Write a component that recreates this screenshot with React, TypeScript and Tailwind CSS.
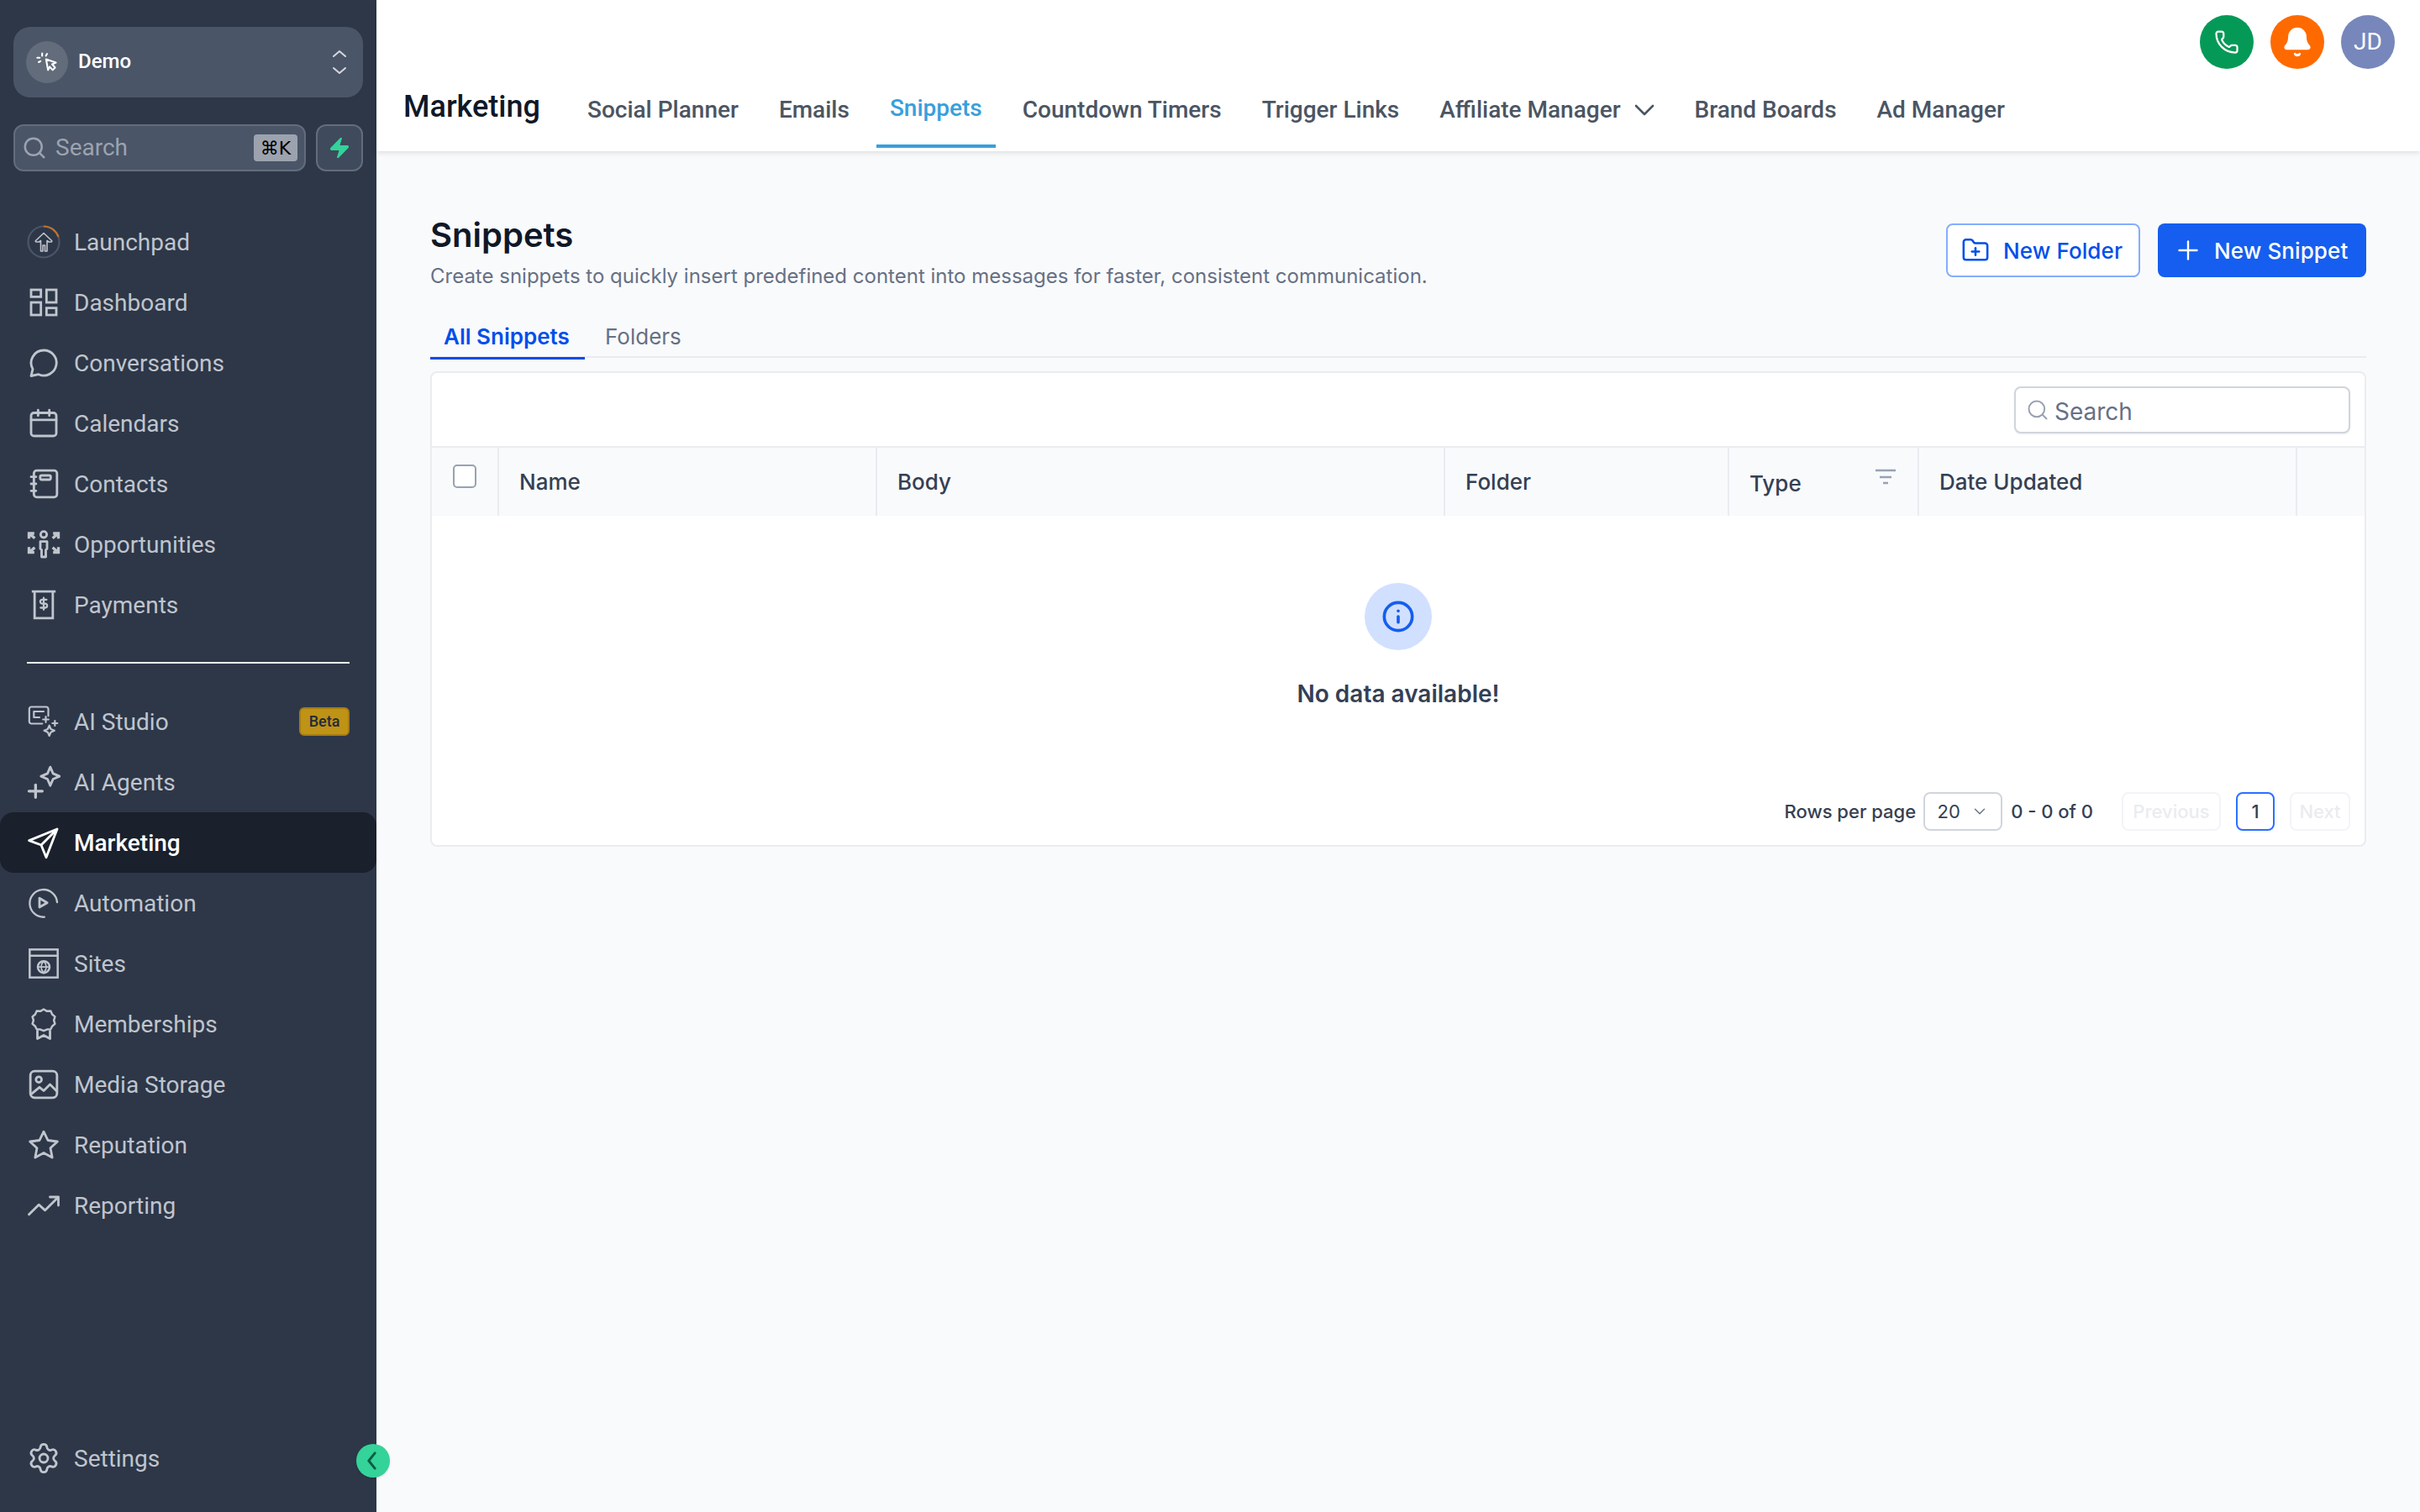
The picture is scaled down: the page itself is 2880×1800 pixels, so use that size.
import { Bell, ChevronDown, FolderPlus, Info, Phone, Plus, Search, Settings, Zap } from "lucide-react"
import type { ReactNode } from "react"

const icon = (children: ReactNode) => (
  <svg viewBox="0 0 24 24" fill="none" stroke="currentColor" strokeWidth="1.7" strokeLinecap="round" strokeLinejoin="round" className="size-[40px] shrink-0">
    {children}
  </svg>
)

const Launchpad = (
  <svg viewBox="0 0 40 40" fill="none" className="size-[40px] shrink-0" strokeWidth="2.2">
    <circle cx="20" cy="20" r="18.5" stroke="#4a5568" />
    <path d="M20 1.5A18.5 18.5 0 0 1 37.5 14" stroke="#c2732c" />
    <path d="M20 9.5 10.5 18.5c-.6.6-.2 1.5.6 1.5h3.4l2-1.5V31h2.5v-7h2.5v7H24V18.5l2 1.5h2.9c.8 0 1.2-.9.6-1.5z" stroke="currentColor" strokeWidth="1.6" strokeLinejoin="round" />
  </svg>
)

const mainNav = [
  { label: "Launchpad", icon: Launchpad },
  {
    label: "Dashboard",
    icon: icon(
      <g strokeLinecap="butt" strokeLinejoin="miter">
        <rect x="3" y="3" width="7" height="5" />
        <rect x="14" y="3" width="7" height="9" />
        <rect x="3" y="12" width="7" height="9" />
        <rect x="14" y="16" width="7" height="5" />
      </g>,
    ),
  },
  { label: "Conversations", icon: icon(<path d="M12 3a9 9 0 1 1-3.6 17.2L3 21.3l1.2-4.9A9 9 0 0 1 12 3z" />) },
  {
    label: "Calendars",
    icon: icon(
      <>
        <rect x="3" y="4.5" width="18" height="16.5" rx="2" />
        <path d="M3 9.5h18M8 2.5v4M16 2.5v4" />
      </>,
    ),
  },
  {
    label: "Contacts",
    icon: icon(
      <>
        <rect x="5" y="2.5" width="16.5" height="19" rx="2" />
        <rect x="9.5" y="6" width="7.5" height="3" rx="1" />
        <path d="M3 7h3.5M3 12h3.5M3 17h3.5" />
      </>,
    ),
  },
  {
    label: "Opportunities",
    icon: icon(
      <g strokeWidth="2">
        <circle cx="12" cy="5" r="2.2" strokeWidth="1.7" />
        <path d="M9.6 10h4.8v5.2l-.9.7V21h-3v-5.1l-.9-.7z" strokeWidth="1.7" />
        <path d="M1.5 8V4.2h3.8M2 4.5l3.6 3.2M22.5 8V4.2h-3.8M22 4.5l-3.6 3.2M1.5 14v3.8h3.8M2 17.5l3.6-3.2M22.5 14v3.8h-3.8M22 17.5l-3.6-3.2" strokeLinecap="butt" strokeLinejoin="miter" />
      </g>,
    ),
  },
  {
    label: "Payments",
    icon: icon(
      <>
        <path d="M3.5 2.5h17M5.5 2.5h13v19h-13z" strokeLinecap="butt" strokeLinejoin="miter" />
        <path d="M14 8.3h-3a1.4 1.4 0 0 0 0 2.9h2a1.4 1.4 0 0 1 0 2.9h-3.2M12 7v8.4" strokeWidth="1.4" />
      </>,
    ),
  },
]

const toolNav = [
  {
    label: "AI Studio",
    badge: "Beta",
    icon: icon(
      <g strokeWidth="1.3">
        <path d="M11 13.5H3.2A1.5 1.5 0 0 1 1.7 12V3A1.5 1.5 0 0 1 3.2 1.5h10.6A1.5 1.5 0 0 1 15.3 3v5" />
        <path d="M5 9V4.8h7M5 9h4" />
        <path d="M13.5 8.5v4M11.5 10.5h4M20 11.5v3.5M18.2 13.2h3.6" />
        <path d="M16 14.8l1.1 2.6 2.6 1.1-2.6 1.1-1.1 2.6-1.1-2.6-2.6-1.1 2.6-1.1z" />
      </g>,
    ),
  },
  {
    label: "AI Agents",
    icon: icon(
      <>
        <path d="M1.5 18.5h9.5M6.2 14v9" strokeWidth="2" />
        <path d="M16.7 1.3l2 4.6 4.6 2-4.6 2-2 4.6-2-4.6-4.6-2 4.6-2z" />
      </>,
    ),
  },
  {
    label: "Marketing",
    icon: icon(<path d="M21.6 2.4 1.6 10.6l8.6 3.2 3.6 8.8zM21.6 2.4 10.2 13.8" />),
  },
  {
    label: "Automation",
    icon: icon(
      <g strokeWidth="1.4">
        <path d="M21.6 11.5A9.8 9.8 0 1 0 12.5 22" />
        <path d="M9 8.5v6.5l5.5-3.2z" strokeWidth="1.7" />
      </g>,
    ),
  },
  {
    label: "Sites",
    icon: icon(
      <g strokeWidth="1.5" strokeLinecap="butt" strokeLinejoin="miter">
        <rect x="2" y="2" width="20" height="20" />
        <path d="M2 6.5h20" />
        <circle cx="12" cy="14.5" r="4.2" />
        <path d="M7.8 14.5h8.4M12 10.3c-2.4 2.6-2.4 5.8 0 8.4 2.4-2.6 2.4-5.8 0-8.4z" strokeWidth="1.1" />
      </g>,
    ),
  },
  {
    label: "Memberships",
    icon: icon(
      <>
        <path d="M12 1.5l2.7 1.6 3-.2 1.2 2.7 2.3 2-.9 2.9.9 2.9-2.3 2-1.2 2.4-3 .2-2.7 1.1-2.7-1.1-3-.2-1.2-2.4-2.3-2 .9-2.9-.9-2.9 2.3-2 1.2-2.7 3 .2z" transform="translate(1.5 .2) scale(.875)" />
        <path d="M7.5 17v5.5l4.5-2.4 4.5 2.4V17" />
      </>,
    ),
  },
  {
    label: "Media Storage",
    icon: icon(
      <>
        <rect x="2.5" y="2.5" width="19" height="19" rx="3" />
        <circle cx="8.5" cy="8.5" r="2" />
        <path d="M3 19l6-5 3 2.5 4.5-4.5 5 5" />
      </>,
    ),
  },
  { label: "Reputation", icon: icon(<path d="M12 2.5l3 6.2 6.8.9-5 4.7 1.3 6.7-6.1-3.3-6.1 3.3 1.3-6.7-5-4.7 6.8-.9z" />) },
  { label: "Reporting", icon: icon(<path d="M1.5 18.5l7-7 4.5 4 9.5-9.5M16.5 6h6v6" />) },
]

const tabs = ["Social Planner", "Emails", "Snippets", "Countdown Timers", "Trigger Links", "Affiliate Manager", "Brand Boards", "Ad Manager"]

const columns = [
  { label: "Name", width: "w-[450px]" },
  { label: "Body", width: "w-[676px]" },
  { label: "Folder", width: "w-[338px]" },
  { label: "Type", width: "w-[226px]" },
  { label: "Date Updated", width: "w-[450px]" },
]

function NavRow({ label, icon, badge, active }: { label: string; icon: ReactNode; badge?: string; active?: boolean }) {
  return (
    <div className={`flex h-[72px] items-center gap-[16px] rounded-[16px] px-[32px] text-[28px] leading-none ${active ? "bg-[#1a202c] font-medium text-white" : "text-[#c0c5cd]"}`}>
      {icon}
      <span className="pt-[1px]">{label}</span>
      {badge && (
        <span className="ml-auto flex h-[34px] w-[60px] items-center justify-center rounded-[6px] border-2 border-[#a67c12] bg-[#bf9315] text-[18px] font-medium text-[#1f2a3d]">
          {badge}
        </span>
      )}
    </div>
  )
}

export default function App() {
  return (
    <div className="relative flex h-screen w-full overflow-hidden bg-[#f9fafb] font-['Inter',sans-serif] text-[#344054]">
      <aside className="flex w-[448px] shrink-0 flex-col bg-[#2d3748] pt-[32px] font-['Roboto',sans-serif]">
        <div className="mx-[16px] flex h-[84px] items-center rounded-[20px] bg-[#4a5568] pl-[15px] pr-[20px]">
          <span className="flex size-[50px] items-center justify-center rounded-full bg-[#626c7b] text-white">
            <svg viewBox="0 0 24 24" fill="none" stroke="currentColor" strokeWidth="1.8" strokeLinecap="round" strokeLinejoin="round" className="size-[28px]">
              <path d="M11 9l10 3.5-3.8 1.7 3 3.3-2.5 2.5-3-3.3L13 20z" />
              <path d="M7 3v2.5M2 7.5h2.5M12 3.5 10.8 5.5M3.5 12l1.8-1" />
            </svg>
          </span>
          <span className="mb-[3px] ml-[12px] text-[24px] font-medium text-white">Demo</span>
          <svg viewBox="0 0 16 28" fill="none" stroke="#d5d8dd" strokeWidth="2" strokeLinecap="round" strokeLinejoin="round" className="ml-auto h-[28px] w-[16px]">
            <path d="M1 7l7-6 7 6M1 21l7 6 7-6" />
          </svg>
        </div>

        <div className="mx-[16px] mt-[32px] flex gap-[12px]">
          <div className="flex h-[56px] flex-1 items-center rounded-[12px] border-2 border-[#626c7b] bg-[#4a5568] pl-[8px] pr-[8px] text-[28px] text-[#9ca3af]">
            <Search className="size-[30px]" strokeWidth={2} />
            <span className="ml-[10px]">Search</span>
            <span className="ml-auto flex h-[32px] w-[52px] items-center justify-center rounded-[4px] bg-[#9ca3af] font-['DejaVu_Sans',sans-serif] text-[22px] text-black">⌘K</span>
          </div>
          <div className="flex size-[56px] items-center justify-center rounded-[12px] border-2 border-[#626c7b] bg-[#3f4a5c]">
            <Zap className="size-[28px] fill-[#34d399] text-[#34d399]" strokeWidth={1} />
          </div>
        </div>

        <nav className="mt-[48px] flex flex-col">
          {mainNav.map((item) => (
            <NavRow key={item.label} {...item} />
          ))}
        </nav>

        <div className="mx-[32px] mt-[32px] h-[2px] bg-[#edf0f4]" />

        <nav className="mt-[33px] flex flex-col">
          {toolNav.map((item) => (
            <NavRow key={item.label} {...item} active={item.label === "Marketing"} />
          ))}
        </nav>

        <div className="mt-auto pb-[28px]">
          <div className="flex h-[72px] items-center gap-[16px] pl-[32px] text-[28px] text-[#c0c5cd]">
            <Settings className="size-[40px]" strokeWidth={1.7} />
            <span className="pt-[1px]">Settings</span>
          </div>
        </div>
      </aside>

      <button className="absolute left-[424px] top-[1719px] flex size-[40px] items-center justify-center rounded-full bg-[#34d399] pr-[3px] text-[#0b5e45] shadow-sm">
        <svg viewBox="0 0 12 24" fill="none" stroke="currentColor" strokeWidth="3.2" strokeLinecap="round" strokeLinejoin="round" className="h-[22px] w-[11px]">
          <path d="M10 2 2 12l8 10" />
        </svg>
      </button>

      <div className="flex min-w-0 flex-1 flex-col">
        <header className="relative z-10 h-[180px] shrink-0 bg-white shadow-[0_2px_6px_rgba(16,24,40,0.12)]">
          <div className="flex justify-end gap-[20px] pr-[30px] pt-[18px]">
            <span className="flex size-[64px] items-center justify-center rounded-full bg-[#059957] text-white">
              <Phone className="size-[30px]" strokeWidth={1.8} />
            </span>
            <span className="flex size-[64px] items-center justify-center rounded-full bg-[#ff6a00] text-white">
              <Bell className="size-[38px] fill-white" strokeWidth={1.8} />
            </span>
            <span className="flex size-[64px] items-center justify-center rounded-full bg-[#7787bb] font-['Roboto',sans-serif] text-[28px] text-white">JD</span>
          </div>
          <div className="flex h-[94px] items-start pl-[32px] font-['Roboto',sans-serif]">
            <h1 className="mr-[40px] mt-[23px] text-[36px] font-medium leading-[44px] text-[#101828]">Marketing</h1>
            <nav className="flex h-[94px] items-stretch gap-[16px] text-[28px] font-medium text-[#4b5563]">
              {tabs.map((tab) => (
                <span key={tab} className={`flex items-center gap-[16px] px-[16px] pt-[3px] ${tab === "Snippets" ? "border-b-4 border-[#38a0db] text-[#38a0db]" : ""}`}>
                  {tab}
                  {tab === "Affiliate Manager" && (
                    <svg viewBox="0 0 24 14" fill="none" stroke="currentColor" strokeWidth="2.6" strokeLinecap="round" strokeLinejoin="round" className="h-[14px] w-[24px]">
                      <path d="M2 2l10 10L22 2" />
                    </svg>
                  )}
                </span>
              ))}
            </nav>
          </div>
        </header>

        <main className="flex-1 px-[64px] pt-[76px]">
          <div className="flex items-start justify-between">
            <div>
              <h2 className="text-[40px] font-semibold leading-[48px] text-[#101828]">Snippets</h2>
              <p className="mt-[9px] text-[24px] leading-[32px] text-[#667085]">Create snippets to quickly insert predefined content into messages for faster, consistent communication.</p>
            </div>
            <div className="mt-[10px] flex gap-[21px] text-[26px] font-medium tracking-[0.1px]">
              <button className="flex h-[64px] w-[231px] items-center gap-[16px] rounded-[8px] border-2 border-[#84adff] bg-white pl-[16px] text-[#004eeb]">
                <FolderPlus className="size-[34px]" strokeWidth={1.8} />
                New Folder
              </button>
              <button className="flex h-[64px] w-[248px] items-center gap-[13px] rounded-[8px] bg-[#155eef] pl-[18px] text-white">
                <Plus className="size-[36px]" strokeWidth={1.6} />
                New Snippet
              </button>
            </div>
          </div>

          <div className="mt-[37px] flex h-[44px] items-start border-b-2 border-[#eaecf0] text-[26px]">
            <span className="-mb-[2px] h-[46px] w-[184px] border-b-[3px] border-[#004eeb] pl-[16px] font-semibold leading-[38px] text-[#004eeb]">All Snippets</span>
            <span className="ml-[24px] leading-[38px] text-[#667085]">Folders</span>
          </div>

          <section className="mt-[16px] rounded-[8px] border-2 border-[#eaecf0] bg-white">
            <div className="flex h-[89px] items-start justify-end border-b-2 border-[#eaecf0] pr-[17px] pt-[16px]">
              <div className="flex h-[56px] w-[400px] items-center gap-[6px] rounded-[8px] border-2 border-[#d0d5dd] bg-white pl-[12px] text-[28px] text-[#667085] shadow-[0_1px_2px_rgba(16,24,40,0.08)]">
                <Search className="size-[28px] text-[#98a2b3]" strokeWidth={1.7} />
                <span className="pt-[3px]">Search</span>
              </div>
            </div>

            <div className="flex h-[81px] bg-[#f9fafb] text-[26px] font-medium">
              <div className="flex w-[80px] shrink-0 justify-center border-r-2 border-[#eaecf0] pt-[20px]">
                <span className="size-[28px] rounded-[5px] border-2 border-[#98a2b3] bg-white" />
              </div>
              {columns.map((col) => (
                <div key={col.label} className={`relative flex shrink-0 items-center border-r-2 border-[#eaecf0] pl-[24px] ${col.width}`}>
                  <span className={col.label === "Type" ? "mt-[4px]" : ""}>{col.label}</span>
                  {col.label === "Type" && (
                    <svg viewBox="0 0 24 20" fill="none" stroke="#98a2b3" strokeWidth="2.5" className="absolute right-[26px] top-[25px] h-[20px] w-[24px]">
                      <path d="M0 2h24M5 10h14M9 17h6" />
                    </svg>
                  )}
                </div>
              ))}
            </div>

            <div className="flex flex-col items-center pt-[80px]">
              <span className="flex size-[80px] items-center justify-center rounded-full bg-[#d1e0ff] text-[#155eef]">
                <Info className="size-[40px]" strokeWidth={2.2} />
              </span>
              <p className="mt-[32px] text-[28px] font-semibold leading-[40px]">No data available!</p>
            </div>

            <div className="mt-[97px] flex h-[46px] items-center pr-[17px] text-[22px] font-medium">
              <span className="ml-auto">Rows per page</span>
              <span className="ml-[9px] flex h-[46px] w-[94px] items-center justify-center gap-[12px] rounded-[8px] border-2 border-[#d0d5dd] font-normal">
                20
                <ChevronDown className="size-[22px] text-[#667085]" strokeWidth={1.5} />
              </span>
              <span className="ml-[10px]">0 - 0 of 0</span>
              <span className="ml-[34px] flex h-[46px] w-[118px] items-center justify-center rounded-[8px] border-2 border-[#f2f4f7] text-[#eaecf0]">Previous</span>
              <span className="ml-[18px] flex h-[46px] w-[46px] items-center justify-center rounded-[8px] border-2 border-[#2970ff]">1</span>
              <span className="ml-[18px] flex h-[46px] w-[72px] items-center justify-center rounded-[8px] border-2 border-[#f2f4f7] text-[#eaecf0]">Next</span>
            </div>
            <div className="h-[17px]" />
          </section>
        </main>
      </div>
    </div>
  )
}
